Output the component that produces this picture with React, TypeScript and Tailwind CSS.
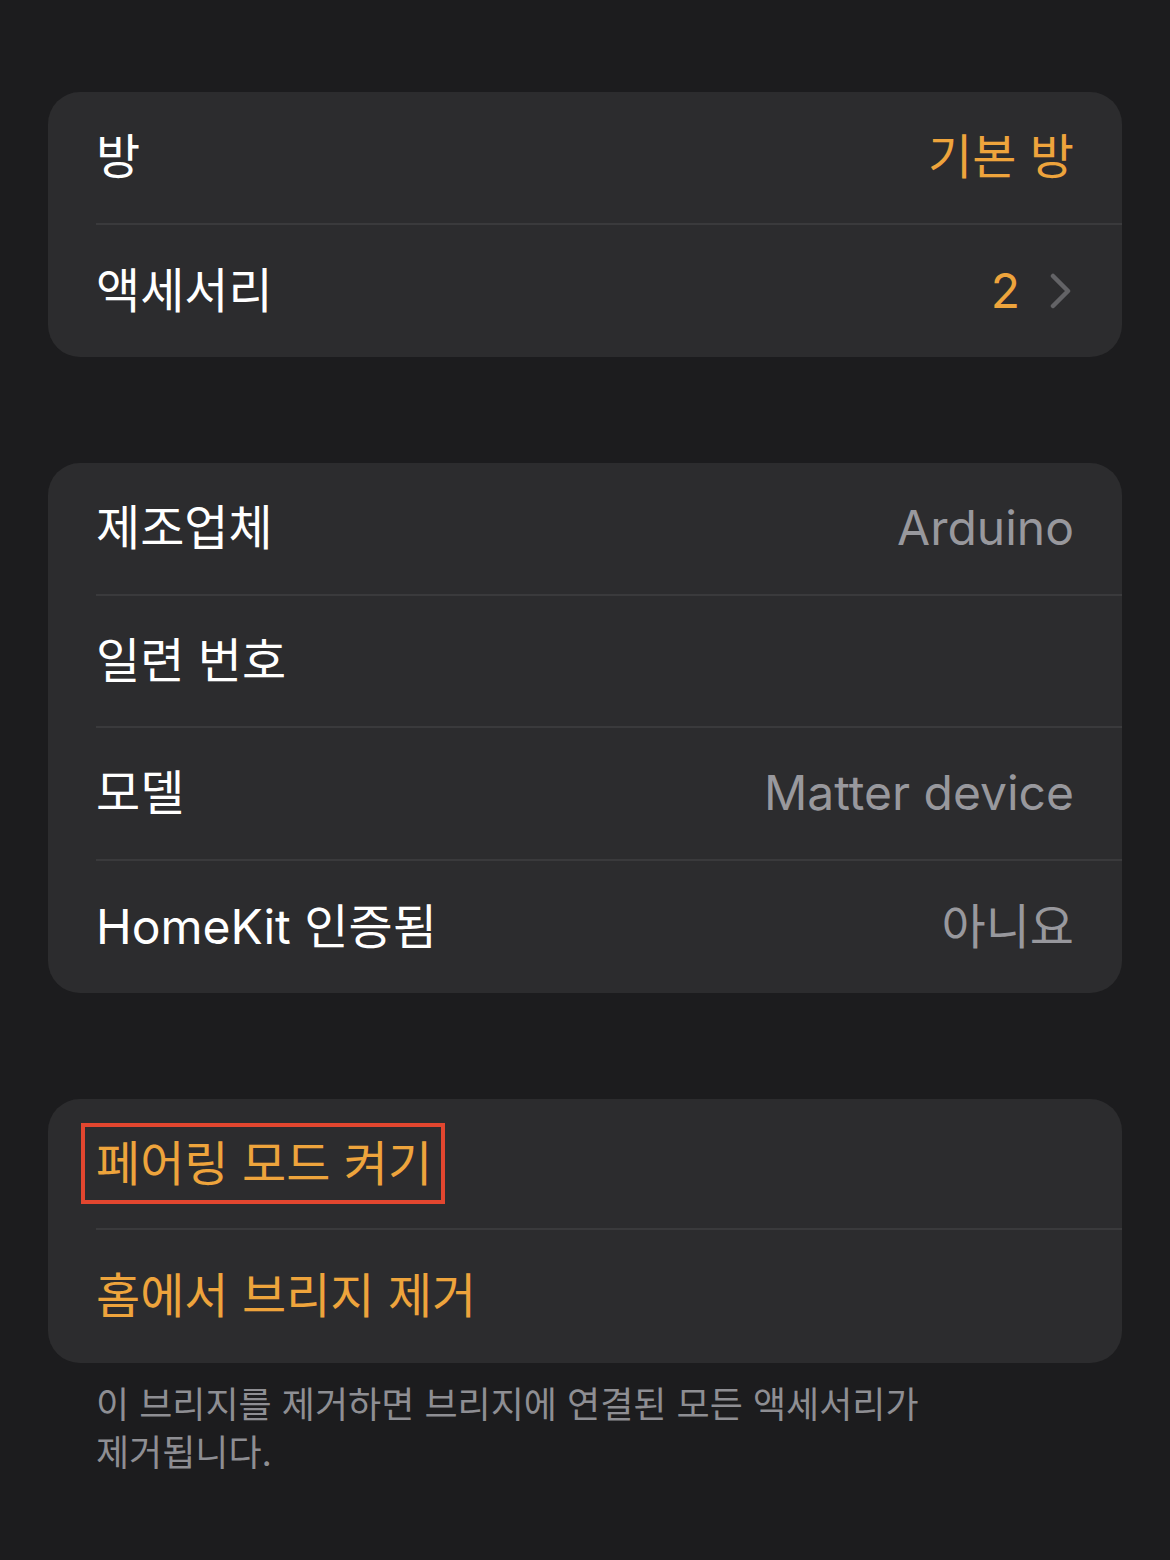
import React from "react";

const font = { fontFamily: '"Inter", "Noto Sans CJK KR", sans-serif' };

function Row({ label, value, valueClass, chevron, last, labelClass }: { label: string; value?: string; valueClass?: string; chevron?: boolean; last?: boolean; labelClass?: string }) {
  return (
    <div className="pl-12">
      <div className={`h-[132.5px] flex items-center justify-between pr-12 ${last ? "" : "border-b-2 border-[#3a3a3c]"}`}>
        <span className={`text-[48px] leading-none ${labelClass ?? "text-white"}`}>{label}</span>
        {value !== undefined && (
          <span className="flex items-center gap-[30px]">
            <span className={`text-[48px] leading-none ${valueClass}`}>{value}</span>
            {chevron && (
              <svg width="22" height="36" viewBox="0 0 22 36" className="mr-[2px]">
                <path d="M3 3 L18 18 L3 33" fill="none" stroke="#636366" strokeWidth="4.5" strokeLinecap="round" strokeLinejoin="round" />
              </svg>
            )}
          </span>
        )}
      </div>
    </div>
  );
}

export default function App() {
  return (
    <div className="w-[1170px] h-[1560px] bg-[#1c1c1e] pt-[92px] px-12" style={font}>
      <div className="bg-[#2c2c2e] rounded-[32px] overflow-hidden">
        <Row label="방" value="기본 방" valueClass="text-[#eea43c]" />
        <Row label="액세서리" value="2" valueClass="text-[#eea43c]" chevron last />
      </div>
      <div className="bg-[#2c2c2e] rounded-[32px] overflow-hidden mt-[106px]">
        <Row label="제조업체" value="Arduino" valueClass="text-[#98989d]" />
        <Row label="일련 번호" />
        <Row label="모델" value="Matter device" valueClass="text-[#98989d]" />
        <Row label="HomeKit 인증됨" value="아니요" valueClass="text-[#98989d]" last />
      </div>
      <div className="bg-[#2c2c2e] rounded-[32px] overflow-hidden mt-[106px]">
        <div className="pl-12">
          <div className="h-[131px] flex items-center pr-12 border-b-2 border-[#3a3a3c]">
            <span className="relative text-[48px] leading-none text-[#eea43c]">
              페어링 모드 켜기
              <span className="absolute left-[-15px] right-[-13px] top-[-17px] bottom-[-16px] border-[4px] border-[#e2462f]" />
            </span>
          </div>
        </div>
        <Row label="홈에서 브리지 제거" labelClass="text-[#eea43c]" last />
      </div>
      <p className="px-12 pt-[18px] text-[36px] leading-[48px] text-[#8e8e93] max-w-[1000px] break-keep">
        이 브리지를 제거하면 브리지에 연결된 모든 액세서리가 제거됩니다.
      </p>
    </div>
  );
}
